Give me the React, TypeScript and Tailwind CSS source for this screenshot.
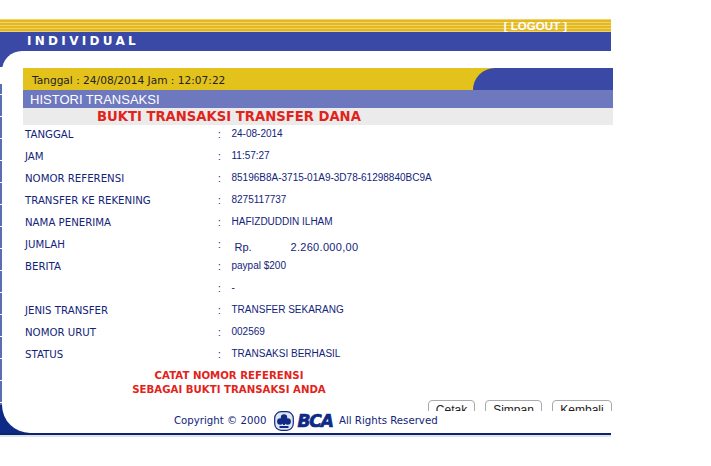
const rows = [
  { label: "TANGGAL", value: "24-08-2014" },
  { label: "JAM", value: "11:57:27" },
  { label: "NOMOR REFERENSI", value: "85196B8A-3715-01A9-3D78-61298840BC9A" },
  { label: "TRANSFER KE REKENING", value: "8275117737" },
  { label: "NAMA PENERIMA", value: "HAFIZDUDDIN ILHAM" },
  { label: "JUMLAH", value: "" },
  { label: "BERITA", value: "paypal $200" },
  { label: "", value: "-" },
  { label: "JENIS TRANSFER", value: "TRANSFER SEKARANG" },
  { label: "NOMOR URUT", value: "002569" },
  { label: "STATUS", value: "TRANSAKSI BERHASIL" },
];

const buttons = [
  { name: "Cetak", width: "w-[47px]" },
  { name: "Simpan", width: "w-[57px]" },
  { name: "Kembali", width: "w-[60px]" },
];

function BcaLogo() {
  return (
    <svg width="20" height="20" viewBox="0 0 20 20" className="block shrink-0">
      <rect x="0.7" y="0.7" width="18.6" height="18.6" rx="6.5" fill="#dfe6f2" stroke="#0f2a86" strokeWidth="1.2" />
      <circle cx="10" cy="6.5" r="3.2" fill="#0f2a86" />
      <circle cx="6.3" cy="10.5" r="3.2" fill="#0f2a86" />
      <circle cx="13.7" cy="10.5" r="3.2" fill="#0f2a86" />
      <rect x="9" y="8" width="2" height="6" fill="#0f2a86" />
      <rect x="5.5" y="15" width="9" height="2" fill="#0f2a86" />
    </svg>
  );
}

export default function App() {
  return (
    <div className="h-[466px] w-[711px] overflow-hidden bg-white pt-[19px] font-['Liberation_Sans',sans-serif]">
      <div className="flex h-[13px] w-[611px] justify-end bg-[repeating-linear-gradient(180deg,#efd36a_0,#efd36a_1px,#e3b821_1px,#e3b821_3px)] pr-[44px]">
        <span className="text-[11.5px] leading-[14px] font-bold text-white">[ LOGOUT ]</span>
      </div>
      <div className="h-[19px] w-[611px] bg-[#3949a5] pl-[27px] font-['DejaVu_Sans',sans-serif] text-[12px] leading-[18px] font-bold tracking-[3.3px] text-white">
        INDIVIDUAL
      </div>

      <div className="w-[611px] bg-[linear-gradient(180deg,#3949a5_0,#3949a5_16px,#fff_16px,#fff_33px,transparent_33px,transparent_354px,#0f2a86_354px),repeating-linear-gradient(180deg,#5a6fb0_0,#5a6fb0_21px,#fff_21px,#fff_22px)]">
        <div className="ml-[2px] h-[382px] rounded-tl-[20px] rounded-bl-[28px] bg-white pt-[17px]">
          <div className="ml-[21px] h-[343px] w-[590px] overflow-hidden">
            <div className="flex h-[22px] bg-[#e3c21c] pl-[9px] font-['DejaVu_Sans',sans-serif] text-[10.6px] leading-[25px] text-[#222]">
              <span className="flex-1">Tanggal : 24/08/2014 Jam : 12:07:22</span>
              <div className="w-[140px] rounded-tl-[28px] bg-[#3949a5]" />
            </div>
            <div className="h-[18px] bg-[#6e78bf] pl-[7px] text-[13px] leading-[19px] text-white">HISTORI TRANSAKSI</div>
            <div className="h-[17px] bg-[#ebebeb] pl-[74px] font-['DejaVu_Sans',sans-serif] text-[13.2px] leading-[18px] font-bold text-[#e2231a]">
              BUKTI TRANSAKSI TRANSFER DANA
            </div>

            <div className="pl-[2px]">
              {rows.map((row, index) => (
                <div key={index} className="flex h-[22px] items-start pt-[2px] leading-[15px] text-[#12247a]">
                  <span className="w-[193px] font-['DejaVu_Sans',sans-serif] text-[10.2px]">{row.label}</span>
                  <span className="w-[13.5px] text-[10px]">:</span>
                  {row.label === "JUMLAH" ? (
                    <span className="flex pt-[3px] pl-[3px] text-[11px]">
                      <span className="w-[56px]">Rp.</span>
                      <span className="tracking-[0.3px]">2.260.000,00</span>
                    </span>
                  ) : (
                    <span className="text-[10px] leading-[13px]">{row.value}</span>
                  )}
                </div>
              ))}
            </div>

            <div className="mt-[2px] pl-[60px] text-center font-['DejaVu_Sans',sans-serif] text-[10.2px] leading-[14px] font-bold text-[#e2231a]">
              <div className="w-[292px]">CATAT NOMOR REFERENSI</div>
              <div className="w-[292px]">SEBAGAI BUKTI TRANSAKSI ANDA</div>
            </div>

            <div className="mt-[3px] flex justify-end gap-[10px] pr-[1px]">
              {buttons.map((button) => (
                <button key={button.name} className={`h-[20px] rounded-[4px] border border-[#aaa] bg-white text-[12px] text-[#222] ${button.width}`}>
                  {button.name}
                </button>
              ))}
            </div>
          </div>

          <div className="flex h-[22px] items-center pb-[2px] pl-[172px] font-['DejaVu_Sans',sans-serif] text-[10.2px] text-[#12247a]">
            <span>Copyright © 2000</span>
            <span className="ml-[8px]"><BcaLogo /></span>
            <span className="ml-[3px] text-[17px] leading-[18px] font-black tracking-[-1px] text-[#0f2a86] italic [-webkit-text-stroke:0.7px_#0f2a86]">BCA</span>
            <span className="ml-[6px]">All Rights Reserved</span>
          </div>
        </div>
      </div>
      <div className="h-[2px] w-[611px] bg-[#10246e]" />
      <div className="h-[2px] w-[611px] bg-[#dde4ee]" />
    </div>
  );
}
